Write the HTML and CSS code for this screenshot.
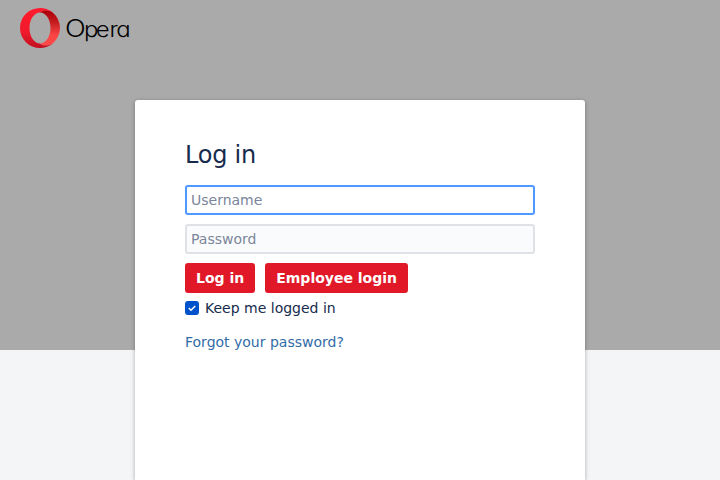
FILE: index.html
```html
<!DOCTYPE html>
<html lang="en">
<head>
<meta charset="utf-8">
<title>Log in</title>
<link rel="stylesheet" href="styles.css">
</head>
<body>
<header class="header">
  <svg class="logo" width="112" height="40" viewBox="0 0 112 40">
    <defs>
      <linearGradient id="ring" x1="0" y1="0" x2="0" y2="1"><stop offset="0" stop-color="#ff1b2d"/><stop offset=".6" stop-color="#f01a2b"/><stop offset="1" stop-color="#c01020"/></linearGradient>
      <linearGradient id="inner" x1="0" y1="0" x2="0" y2="1"><stop offset="0" stop-color="#a80008"/><stop offset=".3" stop-color="#c0181c"/><stop offset=".7" stop-color="#fa4445"/><stop offset="1" stop-color="#ff4b4b"/></linearGradient>
    </defs>
    <path fill="url(#inner)" d="M20 4.500C23 1.500 28.500 1 33 4.800A20 20 0 0 1 33 35.200C28.500 39 23 38.500 20 35.500C25.800 35.500 30.500 28.600 30.500 20S25.800 4.500 20 4.500Z"/>
    <path fill="url(#ring)" d="M20 0A20 20 0 0 0 20 40C25 40 29.500 38.300 33 35.200C28.500 38 23 38.500 20 35.500C14.200 35.500 9.500 28.600 9.500 20S14.200 4.500 20 4.500C23 1.500 28.500 2 33 4.800C29.500 1.700 25 0 20 0Z"/>
    <text class="logo-name" transform="translate(45 29) scale(1.140 1)" x="0" y="0">O<tspan class="logo-small" x="16.600 26.900 39 44.900">pera</tspan></text>
  </svg>
</header>
<main class="card">
  <h1>Log in</h1>
  <form>
    <input class="field focused" type="text" placeholder="Username">
    <input class="field" type="password" placeholder="Password">
    <div class="buttons"><button type="button">Log in</button><button type="button">Employee login</button></div>
    <label class="remember"><svg width="14" height="14" viewBox="0 0 14 14"><rect width="14" height="14" rx="3" fill="#0052cc"/><path d="M3.800 7l2.200 2.200L10.200 5" fill="none" stroke="#fff" stroke-width="1.500"/></svg>Keep me logged in</label>
  </form>
  <a href="#">Forgot your password?</a>
</main>
</body>
</html>
```
FILE: styles.css
```css
* { box-sizing: border-box; }
body { margin: 0; height: 480px; overflow: hidden; background: linear-gradient(#aaa 350px, #f4f5f7 350px); font: 14px/20px "DejaVu Sans", sans-serif; color: #172b4d; }
.header { height: 100px; padding: 8px 20px; display: flex; align-items: flex-start; }
.logo { overflow: visible; }
.logo-name { font: 300 24px Inter, sans-serif; font-feature-settings: "cv11"; fill: #000; }
.logo-small { font-size: 21px; }
.card { width: 450px; height: 380px; margin: 0 auto; padding: 41px 50px 0; background: #fff; border-radius: 3px 3px 0 0; box-shadow: 0 1px 4px rgba(0,0,0,.3); }
h1 { margin: 0 0 16px; font-size: 24px; line-height: 28px; font-weight: 400; letter-spacing: -.01em; }
.field { display: block; width: 350px; height: 30px; margin: 0 0 9px; padding: 4px; border: 2px solid #dfe1e6; border-radius: 3px; background: #fafbfc; font: inherit; outline: none; }
.field::placeholder { color: #7a869a; opacity: 1; }
.focused { border-color: #4c9aff; background: #fff; }
.buttons { display: flex; gap: 10px; }
button { height: 30px; padding: 0 11px; border: 0; border-radius: 3px; background: #e01828; color: #fff; font: bold 14px/20px "DejaVu Sans", sans-serif; }
.remember { display: flex; align-items: center; gap: 6px; margin: 5px 0 14px; }
a { color: #326ca6; text-decoration: none; }
```
